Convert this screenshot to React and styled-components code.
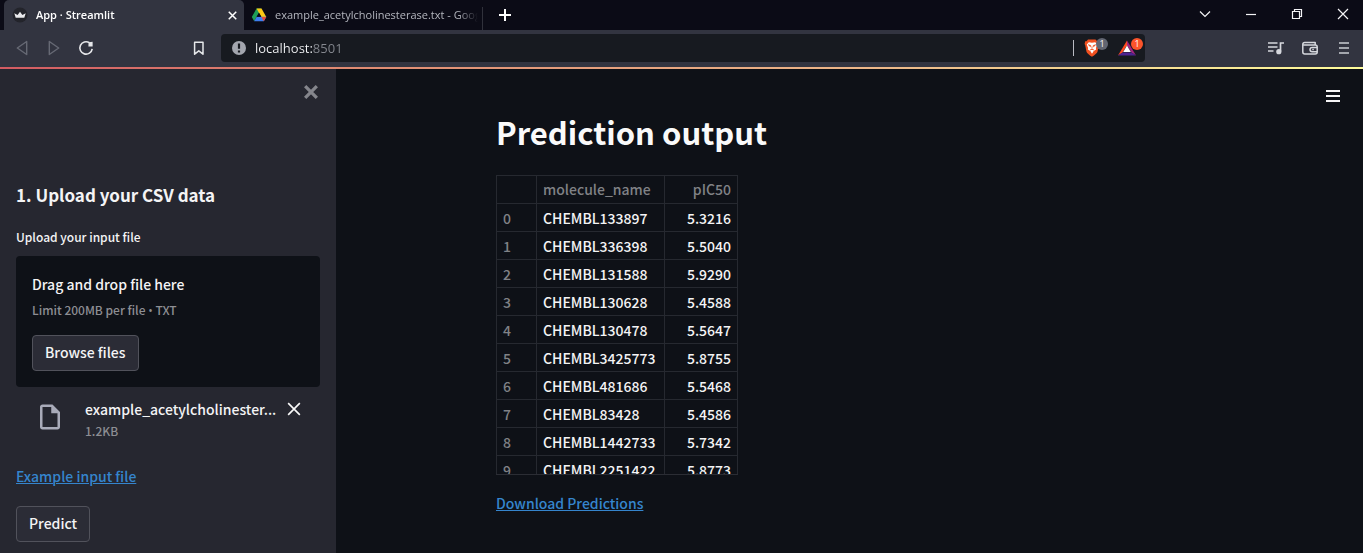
import React, { useRef } from "react";
import styled, { createGlobalStyle } from "styled-components";

const appFont = `"Noto Sans CJK SC", "Open Sans", sans-serif`;
const chromeFont = `"Open Sans", "Noto Sans", sans-serif`;

const GlobalStyle = createGlobalStyle`
  *, *::before, *::after { box-sizing: border-box; }
  body { margin: 0; background: #0e1117; font-family: ${appFont}; }
  button, input { font-family: inherit; }
  svg { display: block; flex: none; }
`;

const Window = styled.div`
  min-height: 100vh;
  display: flex;
  flex-direction: column;
  color: #f4f4f5;
`;

/* Browser chrome */

const TabStrip = styled.header`
  display: flex;
  height: 30px;
  padding-left: 4px;
  background: #0b0b16;
  font-family: ${chromeFont};
`;

const Tab = styled.div`
  flex: 0 1 ${(p) => (p.$active ? 240 : 238)}px;
  min-width: 0;
  display: flex;
  align-items: center;
  gap: 8px;
  padding: ${(p) => (p.$active ? "0 4px 0 8px" : "0 4px 0 7px")};
  border-radius: 5px 5px 0 0;
  background: ${(p) => (p.$active ? "#323440" : "transparent")};
  color: ${(p) => (p.$active ? "#ffffff" : "#b4b6be")};
`;

const TabTitle = styled.span`
  flex: 1;
  min-width: 0;
  overflow: hidden;
  white-space: nowrap;
  font-size: 11px;
  line-height: 16px;
  font-weight: ${(p) => (p.$active ? 600 : 400)};
  mask-image: linear-gradient(to right, #000 calc(100% - 20px), transparent);
`;

const TabDivider = styled.span`
  align-self: flex-end;
  width: 1px;
  height: 23px;
  background: #30313b;
`;

const IconButton = styled.button`
  display: flex;
  align-items: center;
  justify-content: center;
  width: ${(p) => p.$size || 16}px;
  height: ${(p) => p.$size || 16}px;
  padding: 0;
  border: 0;
  background: none;
  color: ${(p) => p.$color || "#ffffff"};
  flex: none;
`;

const NewTab = styled.div`
  display: flex;
  align-items: center;
  padding-left: 14px;
`;

const WindowControls = styled.div`
  margin-left: auto;
  display: flex;
  align-items: center;
  gap: 30px;
  padding: 0 12px 2px 0;
`;

const Toolbar = styled.nav`
  display: flex;
  align-items: center;
  height: 37px;
  padding-bottom: 1px;
  background: #323440;
  font-family: ${chromeFont};
`;

const NavButtons = styled.div`
  flex: none;
  display: flex;
  align-items: center;
  gap: 12px;
  width: 221px;
  padding: 0 12px;
`;

const Bookmark = styled.div`
  margin-left: auto;
`;

const AddressBar = styled.div`
  flex: 1;
  min-width: 0;
  display: flex;
  align-items: center;
  height: 28px;
  padding: 0 3px 0 10px;
  border-radius: 4px;
  background: #171a20;
`;

const AddressInput = styled.input`
  flex: 1;
  min-width: 0;
  height: 20px;
  margin-left: 8px;
  padding: 0;
  border: 0;
  outline: 0;
  font-size: 13px;
  line-height: 20px;
  color: transparent;
  background: linear-gradient(to right, #f4f5f7 57px, #85888f 57px);
  background-clip: text;
  -webkit-background-clip: text;
`;

const BarDivider = styled.span`
  width: 1px;
  height: 16px;
  margin-right: 9px;
  background: #b9bbc2;
`;

const Extension = styled.button`
  position: relative;
  display: flex;
  align-items: center;
  width: 35px;
  height: 24px;
  padding: 0;
  border: 0;
  background: none;
  flex: none;

  & + & {
    width: 24px;
  }
`;

const Badge = styled.span`
  position: absolute;
  top: 2px;
  left: 13px;
  width: 12px;
  height: 12px;
  border-radius: 6px;
  background: ${(p) => p.$color};
  color: #fff;
  font-size: 9px;
  line-height: 12px;
  text-align: center;
`;

const ToolbarActions = styled.div`
  flex: none;
  display: flex;
  align-items: center;
  justify-content: flex-end;
  gap: 14px;
  width: 218px;
  padding-right: 9px;
`;

const Decoration = styled.div`
  height: 2px;
  background: linear-gradient(to right, #d35b62, #e08a72 25%, #eeb98a 65%, #fffd9b);
`;

/* Application */

const Body = styled.div`
  flex: 1;
  display: flex;
  font-weight: 500;
`;

const Sidebar = styled.aside`
  flex: none;
  width: 336px;
  padding: 15px 16px 11px;
  background: #262730;
`;

const SidebarTop = styled.div`
  display: flex;
  justify-content: flex-end;
  height: 97px;
  padding-right: 1px;
`;

const SidebarTitle = styled.h2`
  margin: 0 0 18px;
  font-size: 17px;
  line-height: 28px;
  font-weight: 700;
`;

const FieldLabel = styled.label`
  display: block;
  margin-bottom: 9px;
  font-size: 12px;
  line-height: 20px;
`;

const Dropzone = styled.section`
  display: flex;
  flex-direction: column;
  align-items: flex-start;
  padding: 16px;
  border-radius: 4px;
  background: #0e1117;
`;

const Text = styled.span`
  display: block;
  font-size: 14px;
  line-height: 24px;
  white-space: nowrap;
`;

const Small = styled.small`
  display: block;
  font-size: 12px;
  line-height: 20px;
  color: #8d8e93;
`;

const Limit = styled(Small)`
  margin: 4px 0 15px;
`;

const Bullet = styled.span`
  font-family: "Open Sans", sans-serif;
  line-height: 1;
`;

const Button = styled.button`
  height: 36px;
  padding: 0 12px 2px;
  border: 1px solid #51525b;
  border-radius: 4px;
  background: #2b2c36;
  color: #f4f4f5;
  font-size: 14px;
  font-weight: 500;
  line-height: 24px;
`;

const FileRow = styled.div`
  display: flex;
  align-items: flex-start;
  padding: 10px 18px 0 19px;
  margin-bottom: 23px;
`;

const FileIcon = styled.div`
  width: 50px;
  padding-top: 5px;
  flex: none;
`;

const FileInfo = styled.div`
  flex: 1;
  min-width: 0;
  margin-right: 5px;
`;

const RemoveFile = styled.div`
  padding-top: 4px;
`;

const Link = styled.a`
  display: block;
  width: fit-content;
  font-size: 14px;
  line-height: 24px;
  color: #3585cd;
  text-decoration: underline;
  text-decoration-thickness: 1px;
`;

const Predict = styled(Button)`
  margin-top: 18px;
`;

const Main = styled.main`
  flex: 1;
  min-width: 0;
  background: #0e1117;
`;

const MainHeader = styled.div`
  display: flex;
  justify-content: flex-end;
  padding: 19px 22px 6px;
`;

const Block = styled.div`
  max-width: 739px;
  margin: 0 auto;
  padding: 0 16px;
`;

const Title = styled.h1`
  margin: 0 0 21px;
  font-size: 31px;
  line-height: 44px;
  font-weight: 700;
  color: #fafafa;
`;

const TableFrame = styled.div`
  width: fit-content;
  height: 300px;
  margin-bottom: 16px;
  overflow: hidden;
  border-bottom: 1px solid #2b2d34;
`;

const Table = styled.table`
  border-collapse: collapse;
  font-size: 14px;
  line-height: 25px;
`;

const Cell = styled.td`
  height: 28px;
  padding: 2px 6px 0;
  border: 1px solid #262930;
  text-align: ${(p) => (p.$right ? "right" : "left")};
  width: ${(p) => p.$width}px;
`;

const HeadCell = styled(Cell).attrs({ as: "th" })`
  font-weight: 500;
  color: #808286;

  thead & {
    padding: 1px 6px;
  }
`;

const rows = [
  ["CHEMBL133897", "5.3216"],
  ["CHEMBL336398", "5.5040"],
  ["CHEMBL131588", "5.9290"],
  ["CHEMBL130628", "5.4588"],
  ["CHEMBL130478", "5.5647"],
  ["CHEMBL3425773", "5.8755"],
  ["CHEMBL481686", "5.5468"],
  ["CHEMBL83428", "5.4586"],
  ["CHEMBL1442733", "5.7342"],
  ["CHEMBL2251422", "5.8773"],
];

const CrownIcon = () => (
  <svg width="16" height="16" viewBox="0 0 16 16">
    <circle cx="8" cy="8" r="7.5" fill="#23242b" />
    <path d="M2.3 6.2 5.6 8 8 4.8 10.4 8l3.3-1.8-1.4 4.6H3.7z" fill="#e9e9ec" />
  </svg>
);

const DriveIcon = () => (
  <svg width="16" height="16" viewBox="0 0 16 16">
    <path d="M5.5 1.5h5L5.7 9.8 3.2 14.2.8 10z" fill="#1e9e57" />
    <path d="M5.5 1.5h5l4.8 8.4h-4.9z" fill="#fdc913" />
    <path d="M5.7 9.8h9.6l-2.5 4.4H3.2z" fill="#3d7df0" />
    <path d="M8 5.8 10.3 9.8H5.7z" fill="#0b0b16" />
    <path d="m10.4 9.9 2.4 4.3 2.5-4.3z" fill="#e34c3c" />
  </svg>
);

const CrossIcon = ({ size, width }) => (
  <svg width={size} height={size} viewBox="0 0 12 12" fill="none" stroke="currentColor" strokeWidth={width}>
    <path d="M1 1 11 11M11 1 1 11" />
  </svg>
);

const TriangleIcon = ({ flip }) => (
  <svg width="20" height="20" viewBox="0 0 20 20" fill="none" stroke="#666974" strokeWidth="1.4" strokeLinejoin="round">
    <path d={flip ? "M5.3 3.5 14.7 10 5.3 16.5z" : "M14.7 3.5 5.3 10l9.4 6.5z"} />
  </svg>
);

const ReloadIcon = () => (
  <svg width="20" height="20" viewBox="0 0 20 20" fill="none" stroke="#e6e7ea" strokeWidth="1.6">
    <path d="M13.4 4.7A6.2 6.2 0 1 0 16.2 10.8" />
    <path d="M12.6 4.2 16.6 3.8v4.6h-4.2z" fill="#e6e7ea" stroke="none" />
  </svg>
);

const BookmarkIcon = () => (
  <svg width="20" height="20" viewBox="0 0 20 20" fill="none" stroke="#e6e7ea" strokeWidth="1.5" strokeLinejoin="round">
    <path d="M5.6 4.2h8.4v12L9.8 12.8l-4.2 3.4z" />
  </svg>
);

const InfoIcon = () => (
  <svg width="16" height="16" viewBox="0 0 16 16">
    <circle cx="8" cy="8" r="7" fill="#a3a6ae" />
    <path d="M8 3.5v5.2M8 10.4v2.1" stroke="#171a20" strokeWidth="2.2" />
  </svg>
);

const BraveIcon = () => (
  <svg width="20" height="20" viewBox="0 0 20 20">
    <path d="M5 1.5h7.500l1.700 1.700 1.600.1.600 2.600-.6 1.400-1.300 6.400c-.3 1.300-3.400 3.900-5.500 5.100-2.100-1.200-5.200-3.800-5.500-5.100L2.200 7.300 1.600 5.900l.6-2.600 1.300-.1z" fill="#f1501f" />
    <path d="M5.800 4.200l3.200.6 3.200-.6 2 2.400-1.300 3.500.3 1.500-2.500 1.500-1.700 2.700-1.700-2.700-2.500-1.500.3-1.500L3.800 6.600z" fill="#fff" />
    <path d="M5.400 6.800l2.300.7-.3 1.200zM12.600 6.800l-2.300.7.3 1.200zM9 8.200v2.400M7.100 12l1.900-.9 1.900.9" fill="#f1501f" stroke="#f1501f" strokeWidth=".8" />
  </svg>
);

const RewardsIcon = () => (
  <svg width="20" height="20" viewBox="0 0 20 20">
    <path d="M9 2.500V7.200L4.500 14.400 0 17.500z" fill="#ff4b1f" />
    <path d="M9 2.500V7.200L13.500 14.400 18 17.500z" fill="#a3257f" />
    <path d="M0 17.500 4.500 14.400h9L18 17.500z" fill="#4e2391" />
    <path d="M9 7.500 12.800 14H5.200z" fill="#fff" />
  </svg>
);

const PlaylistIcon = () => (
  <svg width="20" height="20" viewBox="0 0 20 20" fill="none" stroke="#d6d8dd" strokeWidth="1.7">
    <path d="M2 5h9.500M2 9h9.500M2 13h5.500M14.500 13.500V5H18" />
    <circle cx="12.800" cy="13.700" r="2.600" fill="#d6d8dd" stroke="none" />
  </svg>
);

const WalletIcon = () => (
  <svg width="20" height="20" viewBox="0 0 20 20" fill="none" stroke="#d6d8dd" strokeWidth="1.5" strokeLinejoin="round">
    <path d="M15.2 6.8V4.5H4.800A2 2 0 0 0 2.800 6.500v7.500a2 2 0 0 0 2 2h10.400a2 2 0 0 0 2-2V9a2 2 0 0 0-2-2H3.600" />
    <path d="M17.2 9.4h-5a2.2 2.2 0 0 0 0 4.4h5" />
    <path d="M12.3 11.600h1.500" />
  </svg>
);

const MenuIcon = ({ width, gap, color, box, stroke, offset = 0 }) => (
  <svg width={box} height={box} viewBox={`0 0 ${box} ${box}`} stroke={color} strokeWidth={stroke}>
    <path
      d={[-gap, 0, gap].map((y) => `M${(box - width) / 2} ${box / 2 + y + offset}h${width}`).join("")}
    />
  </svg>
);

const PlusIcon = () => (
  <svg width="16" height="16" viewBox="0 0 16 16" stroke="#fff" strokeWidth="2">
    <path d="M8 2v12M2 8h12" />
  </svg>
);

const ControlIcon = ({ d }) => (
  <svg width="16" height="16" viewBox="0 0 16 16" fill="none" stroke="#f4f4f6" strokeWidth="1.2">
    <path d={d} />
  </svg>
);

const FilePageIcon = () => (
  <svg width="30" height="30" viewBox="0 0 24 24" fill="#a9abb9">
    <path d="M14 2H6c-1.1 0-1.99.9-1.99 2L4 20c0 1.1.89 2 1.99 2H18c1.1 0 2-.9 2-2V8l-6-6zM6 20V4h7v5h5v11H6z" />
  </svg>
);

const controls = [
  ["Search tabs", "M3 5.5 8 10.5 13 5.5"],
  ["Minimize", "M3 8.5h10"],
  ["Restore", "M3.5 5.5h7v7h-7zM5.5 5.5v-2h7v7h-2"],
  ["Close window", "M3 3 13 13M13 3 3 13"],
];

function Browser() {
  return (
    <>
      <TabStrip>
        <Tab $active>
          <CrownIcon />
          <TabTitle $active>App · Streamlit</TabTitle>
          <IconButton aria-label="Close tab">
            <CrossIcon size={9} width={2} />
          </IconButton>
        </Tab>
        <Tab>
          <DriveIcon />
          <TabTitle>example_acetylcholinesterase.txt - Google Drive</TabTitle>
        </Tab>
        <TabDivider />
        <NewTab>
          <IconButton aria-label="New tab">
            <PlusIcon />
          </IconButton>
        </NewTab>
        <WindowControls>
          {controls.map(([name, d]) => (
            <IconButton key={name} aria-label={name}>
              <ControlIcon d={d} />
            </IconButton>
          ))}
        </WindowControls>
      </TabStrip>
      <Toolbar>
        <NavButtons>
          <IconButton $size={20} aria-label="Back">
            <TriangleIcon />
          </IconButton>
          <IconButton $size={20} aria-label="Forward">
            <TriangleIcon flip />
          </IconButton>
          <IconButton $size={20} aria-label="Reload">
            <ReloadIcon />
          </IconButton>
          <Bookmark>
            <IconButton $size={20} aria-label="Bookmark">
              <BookmarkIcon />
            </IconButton>
          </Bookmark>
        </NavButtons>
        <AddressBar>
          <InfoIcon />
          <AddressInput aria-label="Address" defaultValue="localhost:8501" />
          <BarDivider />
          <Extension aria-label="Shields">
            <BraveIcon />
            <Badge $color="#626672">1</Badge>
          </Extension>
          <Extension aria-label="Rewards">
            <RewardsIcon />
            <Badge $color="#fb542b">1</Badge>
          </Extension>
        </AddressBar>
        <ToolbarActions>
          <IconButton $size={20} aria-label="Playlist">
            <PlaylistIcon />
          </IconButton>
          <IconButton $size={20} aria-label="Wallet">
            <WalletIcon />
          </IconButton>
          <IconButton $size={20} aria-label="Browser menu">
            <MenuIcon width={10} gap={5} color="#c9cbd1" box={20} stroke={1.6} />
          </IconButton>
        </ToolbarActions>
      </Toolbar>
    </>
  );
}

function UploadPanel() {
  const fileInput = useRef(null);
  return (
    <Sidebar>
      <SidebarTop>
        <IconButton aria-label="Close sidebar" $color="#85868c">
          <CrossIcon size={14} width={2.8} />
        </IconButton>
      </SidebarTop>
      <SidebarTitle>1. Upload your CSV data</SidebarTitle>
      <FieldLabel htmlFor="upload">Upload your input file</FieldLabel>
      <Dropzone>
        <Text>Drag and drop file here</Text>
        <Limit>
          Limit 200MB per file <Bullet>•</Bullet> TXT
        </Limit>
        <input id="upload" type="file" accept=".txt" hidden ref={fileInput} />
        <Button type="button" onClick={() => fileInput.current.click()}>
          Browse files
        </Button>
      </Dropzone>
      <FileRow>
        <FileIcon>
          <FilePageIcon />
        </FileIcon>
        <FileInfo>
          <Text title="example_acetylcholinesterase.txt">example_acetylcholinester...</Text>
          <Small>1.2KB</Small>
        </FileInfo>
        <RemoveFile>
          <IconButton aria-label="Remove file" $color="#fafafa">
            <CrossIcon size={14} width={1.4} />
          </IconButton>
        </RemoveFile>
      </FileRow>
      <Link href="#example">Example input file</Link>
      <Predict type="button">Predict</Predict>
    </Sidebar>
  );
}

export default function App() {
  return (
    <Window>
      <GlobalStyle />
      <Browser />
      <Decoration />
      <Body>
        <UploadPanel />
        <Main>
          <MainHeader>
            <IconButton aria-label="App menu">
              <MenuIcon width={14} gap={5} color="#f5f5f6" box={16} stroke={2} />
            </IconButton>
          </MainHeader>
          <Block>
            <Title>Prediction output</Title>
            <TableFrame>
              <Table>
                <thead>
                  <tr>
                    <HeadCell $width={40} />
                    <HeadCell $width={128}>molecule_name</HeadCell>
                    <HeadCell $width={73} $right>pIC50</HeadCell>
                  </tr>
                </thead>
                <tbody>
                  {rows.map(([name, value], i) => (
                    <tr key={name}>
                      <HeadCell scope="row">{i}</HeadCell>
                      <Cell>{name}</Cell>
                      <Cell $right>{value}</Cell>
                    </tr>
                  ))}
                </tbody>
              </Table>
            </TableFrame>
            <Link href="#download">Download Predictions</Link>
          </Block>
        </Main>
      </Body>
    </Window>
  );
}
